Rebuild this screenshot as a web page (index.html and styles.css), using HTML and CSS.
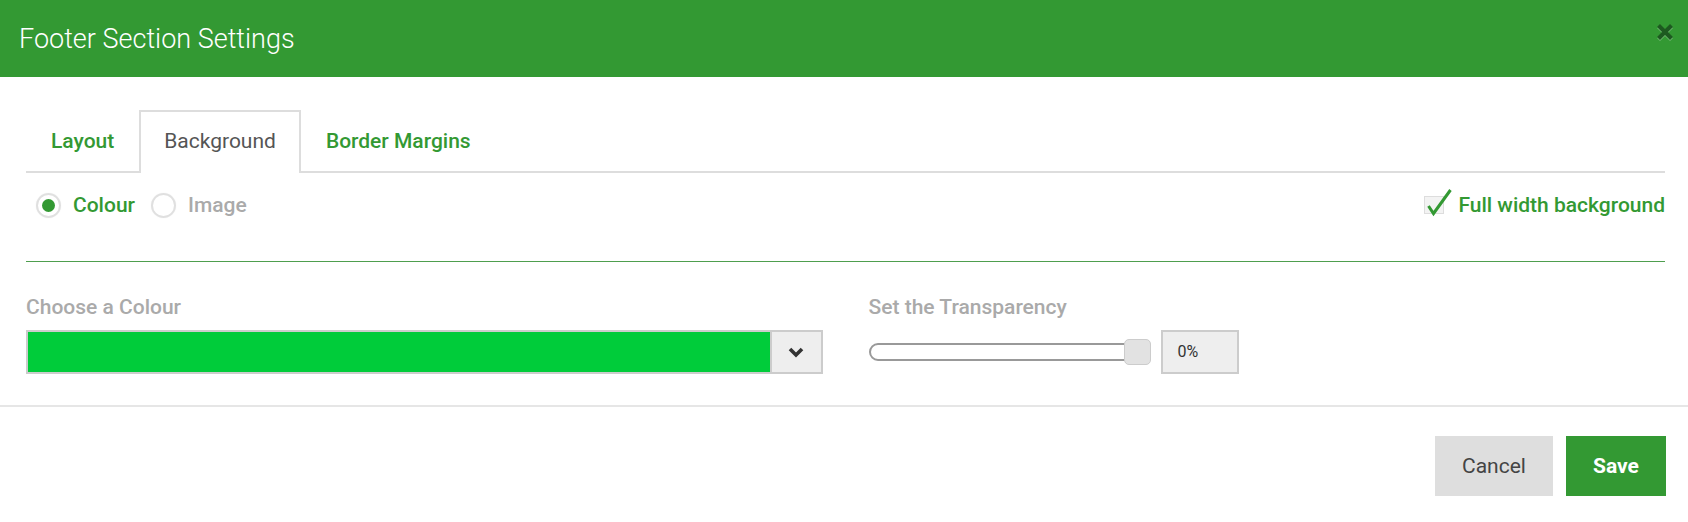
FILE: index.html
```html
<!DOCTYPE html>
<html lang="en">
<head>
    <meta charset="UTF-8">
    <meta name="viewport" content="width=device-width, initial-scale=1.0">
    <title>Footer Section Settings</title>
    <link rel="stylesheet" href="styles.css">
</head>
<body>
    <div class="modal">
        <div class="modal-header">
            <h1>Footer Section Settings</h1>
            <button type="button" class="close" aria-label="Close">
                <svg width="16" height="16" viewBox="0 0 16 16">
                    <path d="M1.5 1.5 L14.5 14.5 M14.5 1.5 L1.5 14.5" stroke="currentColor" stroke-width="4.2" stroke-linecap="butt"/>
                </svg>
            </button>
        </div>
        <div class="modal-body">
            <ul class="tabs">
                <li>Layout</li>
                <li class="active">Background</li>
                <li>Border Margins</li>
            </ul>

            <div class="bg-type">
                <div class="radios">
                    <label class="radio checked"><span class="dot"></span>Colour</label>
                    <label class="radio"><span class="dot"></span>Image</label>
                </div>
                <label class="check">
                    <span class="box">
                        <svg width="30" height="30" viewBox="0 0 30 30">
                            <path d="M3.5 19 L8.5 26.5 L25.5 3" fill="none" stroke="#339933" stroke-width="3" stroke-linejoin="miter"/>
                        </svg>
                    </span>
                    Full width background
                </label>
            </div>

            <div class="fields">
                <div class="field">
                    <div class="field-label">Choose a Colour</div>
                    <div class="colour-select">
                        <div class="swatch"></div>
                        <div class="caret">
                            <svg width="16" height="11" viewBox="0 0 16 11">
                                <path d="M2 2 L8 8 L14 2" fill="none" stroke="#333" stroke-width="3.6"/>
                            </svg>
                        </div>
                    </div>
                </div>
                <div class="field">
                    <div class="field-label">Set the Transparency</div>
                    <div class="slider-row">
                        <div class="slider"><div class="thumb"></div></div>
                        <div class="value">0%</div>
                    </div>
                </div>
            </div>
        </div>
        <div class="modal-footer">
            <button type="button" class="btn cancel">Cancel</button>
            <button type="button" class="btn save">Save</button>
        </div>
    </div>
</body>
</html>
```

FILE: styles.css
```css
body {
    margin: 0;
    background: #fff;
    font-family: Roboto, "Liberation Sans", sans-serif;
}
.modal {
    background: #fff;
}
.modal-header {
    height: 77px;
    background: #339933;
    display: flex;
    align-items: center;
    justify-content: space-between;
    padding: 0 15px 0 19px;
}
.modal-header h1 {
    margin: 0;
    color: #fff;
    font-size: 27px;
    font-weight: 300;
}
.close {
    border: 0;
    background: none;
    padding: 0;
    margin-top: -13px;
    color: #1d5a20;
    display: flex;
    filter: drop-shadow(0 1px 0 rgba(255,255,255,0.35));
}
.modal-body {
    padding: 33px 23px 31px 26px;
}
.tabs {
    list-style: none;
    margin: 0;
    padding: 0;
    display: flex;
    border-bottom: 2px solid #ddd;
}
.tabs li {
    height: 59px;
    line-height: 59px;
    padding: 0 23px;
    border: 2px solid transparent;
    border-bottom: 0;
    margin-bottom: -2px;
    font-size: 21px;
    font-weight: 500;
    color: #339933;
}
.tabs li.active {
    border-color: #ddd;
    background: #fff;
    height: 61px;
    color: #555;
    font-weight: 400;
}
.bg-type {
    height: 64px;
    display: flex;
    align-items: center;
    justify-content: space-between;
}
.radios {
    display: flex;
    gap: 16px;
    padding-left: 10px;
}
.radio {
    display: flex;
    align-items: center;
    gap: 12px;
    font-size: 21px;
    font-weight: 500;
    color: #aaa;
}
.radio.checked {
    color: #339933;
}
.dot {
    width: 21px;
    height: 21px;
    border: 2px solid #e0e0e0;
    border-radius: 50%;
    display: flex;
    align-items: center;
    justify-content: center;
    box-shadow: 0 0 1px rgba(0,0,0,0.1);
}
.radio.checked .dot::after {
    content: "";
    width: 13px;
    height: 13px;
    border-radius: 50%;
    background: #339933;
}
.check {
    display: flex;
    align-items: center;
    gap: 14px;
    font-size: 21px;
    font-weight: 500;
    color: #339933;
}
.box {
    position: relative;
    width: 18px;
    height: 16px;
    border: 1px solid #ddd;
    background: #f3f3f3;
}
.box svg {
    position: absolute;
    left: 0;
    top: -10px;
}
.fields {
    border-top: 1px solid #4e9e4e;
    margin-top: 24px;
    padding-top: 33px;
    display: grid;
    grid-template-columns: 1fr 1fr;
    column-gap: 46px;
}
.field-label {
    font-size: 21px;
    font-weight: 500;
    line-height: 24px;
    color: #aaa;
    margin-bottom: 11px;
}
.colour-select {
    height: 40px;
    border: 2px solid #ccc;
    display: flex;
}
.swatch {
    flex: 1;
    background: #00cc3a;
}
.caret {
    width: 49px;
    background: #eee;
    border-left: 2px solid #ccc;
    display: flex;
    align-items: center;
    justify-content: center;
}
.slider-row {
    display: flex;
    align-items: center;
    height: 44px;
}
.slider {
    position: relative;
    width: 278px;
    height: 14px;
    border: 2px solid #999;
    border-radius: 9px;
    background: #fff;
}
.thumb {
    position: absolute;
    right: -2px;
    top: -6px;
    width: 25px;
    height: 24px;
    background: #e2e2e2;
    border: 1px solid #ccc;
    border-radius: 5px;
}
.value {
    margin-left: 10px;
    width: 59px;
    height: 40px;
    line-height: 40px;
    padding-left: 15px;
    border: 2px solid #ccc;
    background: #eee;
    color: #333;
    font-size: 16px;
}
.modal-footer {
    border-top: 2px solid #e6e6e6;
    padding: 29px 22px 26px;
    display: flex;
    justify-content: flex-end;
    gap: 13px;
}
.btn {
    height: 60px;
    border: 0;
    font-family: inherit;
    font-size: 21px;
    padding: 0;
}
.cancel {
    width: 118px;
    background: #dedede;
    color: #444;
}
.save {
    width: 100px;
    background: #339933;
    color: #fff;
    font-weight: 700;
}
```
